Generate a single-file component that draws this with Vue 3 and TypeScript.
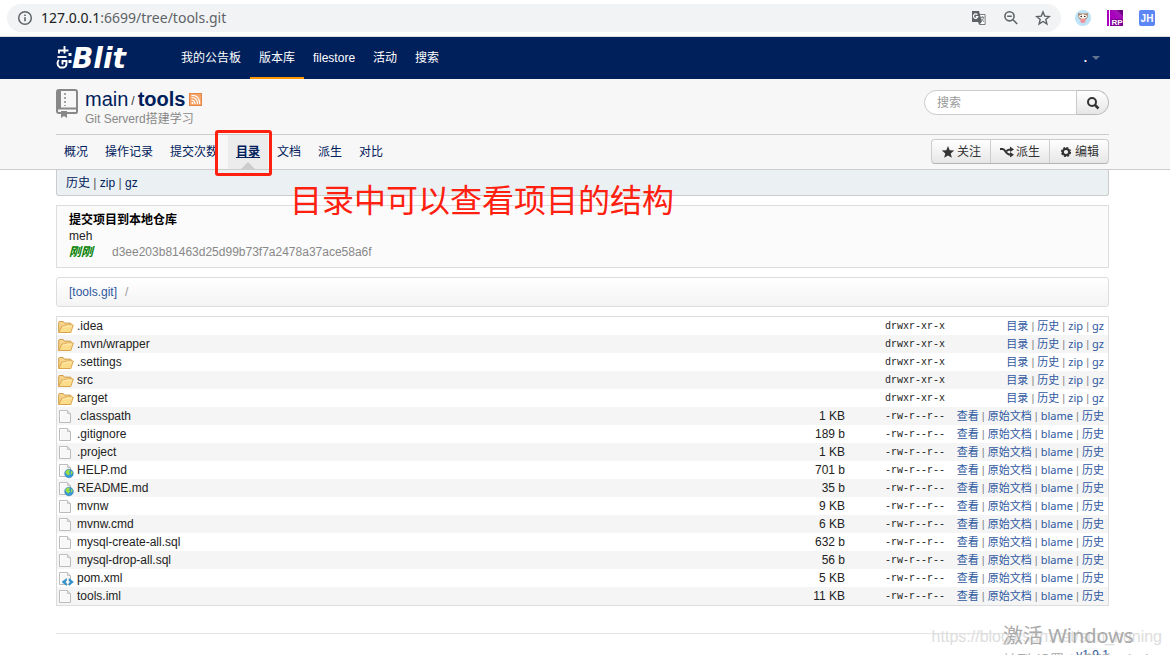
<script setup lang="ts">
type Kind = 'folder' | 'file' | 'web' | 'xml'
interface Entry { name: string; kind: Kind; size: string }

const entries: Entry[] = [
  { name: '.idea', kind: 'folder', size: '' },
  { name: '.mvn/wrapper', kind: 'folder', size: '' },
  { name: '.settings', kind: 'folder', size: '' },
  { name: 'src', kind: 'folder', size: '' },
  { name: 'target', kind: 'folder', size: '' },
  { name: '.classpath', kind: 'file', size: '1 KB' },
  { name: '.gitignore', kind: 'file', size: '189 b' },
  { name: '.project', kind: 'file', size: '1 KB' },
  { name: 'HELP.md', kind: 'web', size: '701 b' },
  { name: 'README.md', kind: 'web', size: '35 b' },
  { name: 'mvnw', kind: 'file', size: '9 KB' },
  { name: 'mvnw.cmd', kind: 'file', size: '6 KB' },
  { name: 'mysql-create-all.sql', kind: 'file', size: '632 b' },
  { name: 'mysql-drop-all.sql', kind: 'file', size: '56 b' },
  { name: 'pom.xml', kind: 'xml', size: '5 KB' },
  { name: 'tools.iml', kind: 'file', size: '11 KB' },
]
const folderLinks = ['目录', '历史', 'zip', 'gz']
const fileLinks = ['查看', '原始文档', 'blame', '历史']
const mainNav = ['我的公告板', '版本库', 'filestore', '活动', '搜索']
const tabs = ['概况', '操作记录', '提交次数', '目录', '文档', '派生', '对比']
const linksFor = (e: Entry) => (e.kind === 'folder' ? folderLinks : fileLinks)
</script>

<template>
  <div class="page">
    <div class="browser">
      <div class="address">
        <svg class="info" width="16" height="16" viewBox="0 0 16 16" fill="none" stroke="#5f6368">
          <circle cx="8" cy="8" r="6.3" stroke-width="1.5" />
          <path d="M8 7.2v4M8 4.4v1.5" stroke-width="1.6" />
        </svg>
        <span class="url"><span class="host">127.0.0.1</span>:6699/tree/tools.git</span>
        <button class="tool" aria-label="翻译">
          <svg width="16" height="16" viewBox="0 0 16 16">
            <path d="M6.5 4.5h7.6v10H8.5l-1-2.5" fill="#fff" stroke="#777b80" />
            <path d="M1 1h7l3 11H1z" fill="#5f6368" />
            <path d="M6.3 4.7a2.2 2.2 0 1 0 .5 2H4.8" fill="none" stroke="#fff" stroke-width="1.2" />
            <path d="M7.5 12h3l-2 2.8z" fill="#5f6368" />
            <path d="M9.4 7.3h4M11.4 6.2v1.1M12.7 7.4c-.5 2-1.4 3-2.6 4M10.4 8.7c.6 1.2 1.5 2.2 2.6 3" fill="none" stroke="#777b80" />
          </svg>
        </button>
        <button class="tool" aria-label="缩放">
          <svg width="16" height="16" viewBox="0 0 16 16" fill="none" stroke="#5f6368" stroke-width="1.6">
            <circle cx="6.5" cy="6.3" r="4.6" /><path d="M10 9.8l4.2 4.2M4.2 6.3h4.6" />
          </svg>
        </button>
        <button class="tool" aria-label="收藏">
          <svg width="16" height="16" viewBox="0 0 16 16" fill="none" stroke="#5f6368" stroke-width="1.4">
            <path d="M8 1.9l1.7 4.2 4.6.4-3.5 3 1.1 4.4L8 11.5l-3.9 2.4 1.1-4.4-3.5-3 4.6-.4z" />
          </svg>
        </button>
      </div>
      <div class="extensions">
        <svg width="16" height="16" viewBox="0 0 16 16">
          <circle cx="8" cy="8" r="8" fill="#bde3f7" />
          <path d="M3 3l2 .5h6l2-.5-.5 4.5-1.5 2H5L3.5 7.5z" fill="#a98268" />
          <path d="M7 4h2l1 5H6z" fill="#f8e7d6" />
          <circle cx="5.8" cy="6.5" r="1.7" fill="#fff" /><circle cx="10.2" cy="6.5" r="1.7" fill="#fff" />
          <circle cx="6.2" cy="6.5" r=".8" fill="#222" /><circle cx="9.8" cy="6.5" r=".8" fill="#222" />
          <ellipse cx="8" cy="10.8" rx="2.6" ry="2.3" fill="#f1929b" />
        </svg>
        <svg width="16" height="16" viewBox="0 0 16 16">
          <path d="M0 0h16v16H0z" fill="#a900bd" /><path d="M4 0h12v7z" fill="#6e0086" /><path d="M4 0l12 12V6L10 0z" fill="#a312b8" />
          <path d="M2.5 0v16" stroke="#fff" /><path d="M4 16h12V9H4z" fill="#7d0092" />
          <text x="4.5" y="14.5" class="rp">RP</text>
        </svg>
        <svg width="16" height="16" viewBox="0 0 16 16">
          <rect width="16" height="16" rx="2" fill="#5c85f5" /><text x="8" y="11.5" text-anchor="middle" class="jh">JH</text>
        </svg>
      </div>
    </div>

    <header class="navbar">
      <div class="container nav-row">
        <a class="brand" href="#" aria-label="Gitblit">
          <svg width="80" height="36" viewBox="0 0 80 36">
            <g fill="none" stroke="#fff" stroke-width="1.9">
              <path d="M2 8.500h10.500M8.500 4v7.500M3 8.500v3" />
              <path d="M1.500 15h9" />
              <path d="M3 18q-1.500 1-1.500 3.500t2.500 4h3.500q3-.8 3-4V19H6.500v3.500" />
            </g>
            <path d="M12.500 11h3v3h-3zM12.500 18h3v3h-3z" fill="#fff" />
            <text x="16" y="26" class="blit">Blit</text>
          </svg>
        </a>
        <nav class="main-nav">
          <a v-for="item in mainNav" :key="item" href="#" :class="{ active: item === '版本库' }">{{ item }}</a>
        </nav>
        <button class="user" aria-label="用户菜单">.<span class="caret"></span></button>
      </div>
    </header>

    <section class="repo-head">
      <div class="container">
        <div class="title-row">
          <svg class="repo-icon" width="24" height="32" viewBox="0 0 24 32">
            <path d="M3 2h16q2 0 2 2v19q0 2-1 2H3q-2 0-2-2V4q0-2 2-2z" fill="#f7f7f7" stroke="#888" stroke-width="2" />
            <path d="M1 2h4v19H1z" fill="#888" /><path d="M1 20.5h20" stroke="#888" stroke-width="2" />
            <path d="M9 5v13" stroke="#888" stroke-width="1.5" stroke-dasharray="2 2" />
            <path d="M5 23h6v7l-3-2-3 2z" fill="#888" />
          </svg>
          <div class="names">
            <h1><a href="#">main</a><span class="slash">/</span><a href="#" class="repo">tools</a>
              <a class="rss" href="#" aria-label="RSS"><svg width="13" height="13" viewBox="0 0 13 13">
                <path d="M0 0h13v13H0z" fill="#e88745" /><path d="M1 1h11v11H1z" fill="#f4a76c" />
                <path d="M2.500 7q3.500 0 3.500 4M2.500 4.500q6 0 6 6.500M2.500 2.200q8.300 0 8.300 8.800" fill="none" stroke="#fff" stroke-width="1.1" />
                <circle cx="3.500" cy="10" r="1" fill="#fff" />
              </svg></a></h1>
            <p>Git Serverd搭建学习</p>
          </div>
          <form class="search" @submit.prevent>
            <input type="text" placeholder="搜索" aria-label="搜索" />
            <button aria-label="搜索"><svg width="14" height="14" viewBox="0 0 14 14" fill="none" stroke="#333">
              <circle cx="6" cy="6" r="4" stroke-width="2" /><path d="M9 9l3.500 3.500" stroke-width="2.500" />
            </svg></button>
          </form>
        </div>
        <div class="tab-row">
          <nav class="tabs">
            <a v-for="t in tabs" :key="t" href="#" :class="{ current: t === '目录' }">{{ t }}</a>
          </nav>
          <div class="group">
            <button><svg width="14" height="14" viewBox="0 0 14 14"><path d="M7 1l1.700 4.200 4.500.3-3.500 2.900 1.200 4.400L7 10.400l-3.900 2.400 1.200-4.400L.8 5.500l4.500-.3z" fill="#333" /></svg>关注</button>
            <button><svg width="14" height="14" viewBox="0 0 14 14"><path d="M0 4h2.500q1.500 0 3 2.500T9 9.500h1.500M6.500 6Q8 4.500 10.500 4.500" fill="none" stroke="#333" stroke-width="2" /><path d="M10 1.500l4 3-4 2.500zM10 7l4 2.700-4 2.800z" fill="#333" /></svg>派生</button>
            <button><svg width="14" height="14" viewBox="0 0 14 14" fill="none" stroke="#333"><circle cx="7" cy="7" r="3.200" stroke-width="2.200" /><circle cx="7" cy="7" r="4.500" stroke-width="1.200" stroke-dasharray="2 1.530" /></svg>编辑</button>
          </div>
        </div>
      </div>
    </section>

    <main class="container">
      <div class="subnav"><a href="#">历史</a> | <a href="#">zip</a> | <a href="#">gz</a></div>
      <section class="commit">
        <a class="subject" href="#">提交项目到本地仓库</a>
        <a class="author" href="#">meh</a>
        <div class="hash"><span class="age">刚刚</span><span>d3ee203b81463d25d99b73f7a2478a37ace58a6f</span></div>
      </section>
      <div class="crumb"><a href="#">[tools.git]</a><span>/</span></div>
      <table class="files">
        <tbody>
          <tr v-for="e in entries" :key="e.name">
            <td class="icon">
              <svg width="16" height="16" viewBox="0 0 16 16">
                <template v-if="e.kind === 'folder'">
                  <path d="M.7 13.500V3.500q0-1 1-1h3.500l1.200 1.600h5.800q1 0 1 1V7" fill="#f7d48b" stroke="#cf9c4c" />
                  <path d="M.8 13.500L3.800 7h3l1-1h7.500l-2.500 7.500z" fill="#fbdc8a" stroke="#dba54e" />
                  <path d="M4.500 8h2.800l1-1h5.500" stroke="#fff0bd" fill="none" />
                </template>
                <template v-else>
                  <path d="M1.500 1.500h8l3 3v9h-11z" fill="#f7f7f7" stroke="#bcbcbc" />
                  <path d="M9.500 1.500v3h3" fill="#ddd" stroke="#c4c4c4" />
                  <path d="M2.500 2.500h6M2.500 2.500v10" stroke="#fff" />
                </template>
                <template v-if="e.kind === 'web'">
                  <circle cx="11" cy="10.500" r="4.300" fill="#3698d4" stroke="#2979b1" stroke-width=".6" />
                  <path d="M8 8q2-2.300 4-1l-1 2 1 1.500-1.500 2q-1.500-1-3-2.500zM13.500 7.500l1.200 2-.8 2-1.300-1z" fill="#9bdc45" />
                </template>
                <template v-if="e.kind === 'xml'">
                  <path d="M8.500 7.500L4 11l4.500 3.500V12.300L7.200 11l1.300-1.300zM11 7.500l4.500 3.500-4.500 3.500v-2.200l1.300-1.300L11 9.700z" fill="#2d94cf" stroke="#2680b8" stroke-width=".5" />
                </template>
              </svg>
            </td>
            <td class="name"><a href="#">{{ e.name }}</a></td>
            <td class="size">{{ e.size }}</td>
            <td class="mode">{{ e.kind === 'folder' ? 'drwxr-xr-x' : '-rw-r--r--' }}</td>
            <td class="links">
              <template v-for="(l, i) in linksFor(e)" :key="l"><template v-if="i"> | </template><a href="#">{{ l }}</a></template>
            </td>
          </tr>
        </tbody>
      </table>
      <footer><a href="#">v1.9.1</a></footer>
    </main>

    <div class="marker"></div>
    <div class="callout">目录中可以查看项目的结构</div>
    <div class="blog-mark">https://blog.csdn.net/sun_huning</div>
    <div class="activate"><strong>激活 Windows</strong><span>转到“设置”以激活 Windows。</span></div>
  </div>
</template>

<style>
html, body { height: 100%; overflow: hidden; }
</style>

<style scoped>
* { box-sizing: border-box; }
.page { position: relative; height: 100vh; overflow: hidden; background: #fff; color: #333; font: 12px/18px "Liberation Sans", "Noto Sans CJK SC", sans-serif; }
a { color: #00205b; text-decoration: none; }
button { font: inherit; border: 0; background: none; padding: 0; }
svg { display: block; flex: none; }
.container { margin: 0 61px 0 56px; }
.browser { display: flex; align-items: center; height: 37px; padding: 0 15px 1px 7px; border-bottom: 1px solid #ddd; }
.address { flex: 1; display: flex; align-items: center; height: 28px; border-radius: 14px; padding: 0 10px; background: #f1f3f4; }
.url { flex: 1; margin-left: 8px; color: #5f6368; font: 14px/20px "Noto Sans", sans-serif; }
.host { color: #202124; }
.tool { margin-left: 16px; }
.extensions { display: flex; gap: 16px; margin-left: 14px; }
.rp { font: bold 8px "Liberation Sans", sans-serif; fill: #fff; }
.jh { font: bold 10px "Liberation Sans", sans-serif; fill: #fff; }
.navbar { background: #00205b; height: 42px; }
.nav-row { display: flex; height: 42px; }
.brand { width: 116px; padding-top: 5px; }
.blit { font: italic bold 28px "DejaVu Sans", sans-serif; fill: #fff; }
.main-nav { display: flex; flex: 1; }
.main-nav a { padding: 12px 9px 10px; color: #fff; border-bottom: 2px solid transparent; }
.main-nav a.active { border-color: #ff9900; }
.user { color: #fff; display: flex; align-items: center; gap: 5px; margin-right: 9px; font-weight: bold; }
.caret { border: 4px solid transparent; border-top-color: #607292; border-bottom: 0; }
.repo-head { background: #f7f7f7; border-bottom: 1px solid #ccc; }
.title-row { display: flex; height: 56px; padding-top: 9px; border-bottom: 1px solid #ccc; }
.repo-icon { margin-right: 5px; }
.names { flex: 1; }
h1 { display: flex; align-items: center; margin: 0; font-size: 20px; font-weight: normal; line-height: 20px; }
.slash { font-size: 12px; padding: 4px 3px 0; }
.repo { font-weight: bold; }
.rss { margin-left: 4px; }
.names { margin-top: -1px; }
.names p { margin: 0; color: #888; line-height: 16px; }
.search { display: flex; height: 25px; margin-top: 2px; }
.search input { width: 153px; border: 1px solid #ccc; border-radius: 13px 0 0 13px; padding: 0 12px; font: inherit; background: #fff; }
.search input::placeholder { color: #999; }
.search button { width: 33px; display: grid; place-items: center; border: 1px solid #bbb; border-left-color: #ccc; margin-left: -1px; border-radius: 0 13px 13px 0; background: linear-gradient(#fff, #e6e6e6); }
.tab-row { display: flex; justify-content: space-between; height: 34px; }
.tabs { display: flex; }
.tabs a { position: relative; padding: 8px 8px; margin-right: 1px; }
.tabs .current { background: #ececec; font-weight: bold; text-decoration: underline; margin: 0 1px; }
.current::after { content: ""; position: absolute; left: 50%; bottom: 0; margin-left: -7px; border: 7px solid transparent; border-top: 0; border-bottom-color: #ccc; }
.group { display: flex; height: 25px; margin-top: 4px; border: 1px solid #ccc; border-bottom-color: #b3b3b3; border-radius: 4px; background: linear-gradient(#fff, #e6e6e6); }
.group button { display: flex; align-items: center; gap: 2px; padding: 0 9px; color: #333; }
.group button + button { border-left: 1px solid #ccc; }
.subnav { height: 26px; padding: 4px 9px; border: 1px solid #ccc; border-top: 0; border-radius: 0 0 3px 3px; background: #ebf0f3; color: #555; }
.commit { display: flex; flex-direction: column; margin-top: 9px; padding: 6px 12px 7px; border: 1px solid #ddd; background: #fbfbfb; line-height: 16px; }
.subject { color: #000; font-weight: bold; }
.author { color: #222; }
.hash { color: #888; }
.age { display: inline-block; width: 43px; color: #008000; font-weight: bold; font-style: italic; }
.crumb { height: 30px; margin: 9px 0; padding: 5px 12px; border: 1px solid #ddd; border-radius: 3px; background: linear-gradient(#fff, #f4f4f4); }
.crumb a { color: #2f58a0; }
.crumb span { margin-left: 8px; color: #999; }
.files { width: 100%; border-collapse: separate; border-spacing: 0; border: 1px solid #ddd; }
.files tr:nth-child(even) { background: #f5f5f5; }
.files td { height: 18px; padding: 0; line-height: 18px; }
.files .icon { width: 20px; padding: 1px 0 0 1px; }
.files .name a { color: #222; }
.files .size { width: 80px; text-align: right; color: #222; }
.files .mode { width: 100px; padding-top: 1px; text-align: right; font: 10px/17px "Liberation Mono", monospace; color: #222; }
.files .links { width: 163px; padding-right: 4px; text-align: right; white-space: nowrap; font-size: 11px; color: #888; }
.files .links a { color: #2f58a0; font-family: "Noto Sans", "Noto Sans CJK SC", sans-serif; line-height: 16px; }
footer { margin-top: 27px; padding-top: 12px; border-top: 1px solid #e5e5e5; text-align: right; line-height: 18px; }
footer a { color: #2f58a0; }
.marker { position: absolute; left: 215px; top: 130px; width: 57px; height: 46px; border: 3px solid #ff2010; border-radius: 3px; }
.callout { position: absolute; left: 290px; top: 176px; color: #ff2010; font: 32px/44px "Noto Sans CJK SC", sans-serif; white-space: nowrap; }
.blog-mark { position: absolute; right: 8px; top: 627px; color: #ddd; font: 16px/20px "Liberation Sans", sans-serif; }
.activate { position: absolute; left: 1003px; top: 622px; color: #aaa; white-space: nowrap; font: 14px/20px "Noto Sans", "Noto Sans CJK SC", sans-serif; }
.activate strong { display: block; font-size: 20px; line-height: 28px; font-weight: normal; }
.activate span { display: block; }
</style>
